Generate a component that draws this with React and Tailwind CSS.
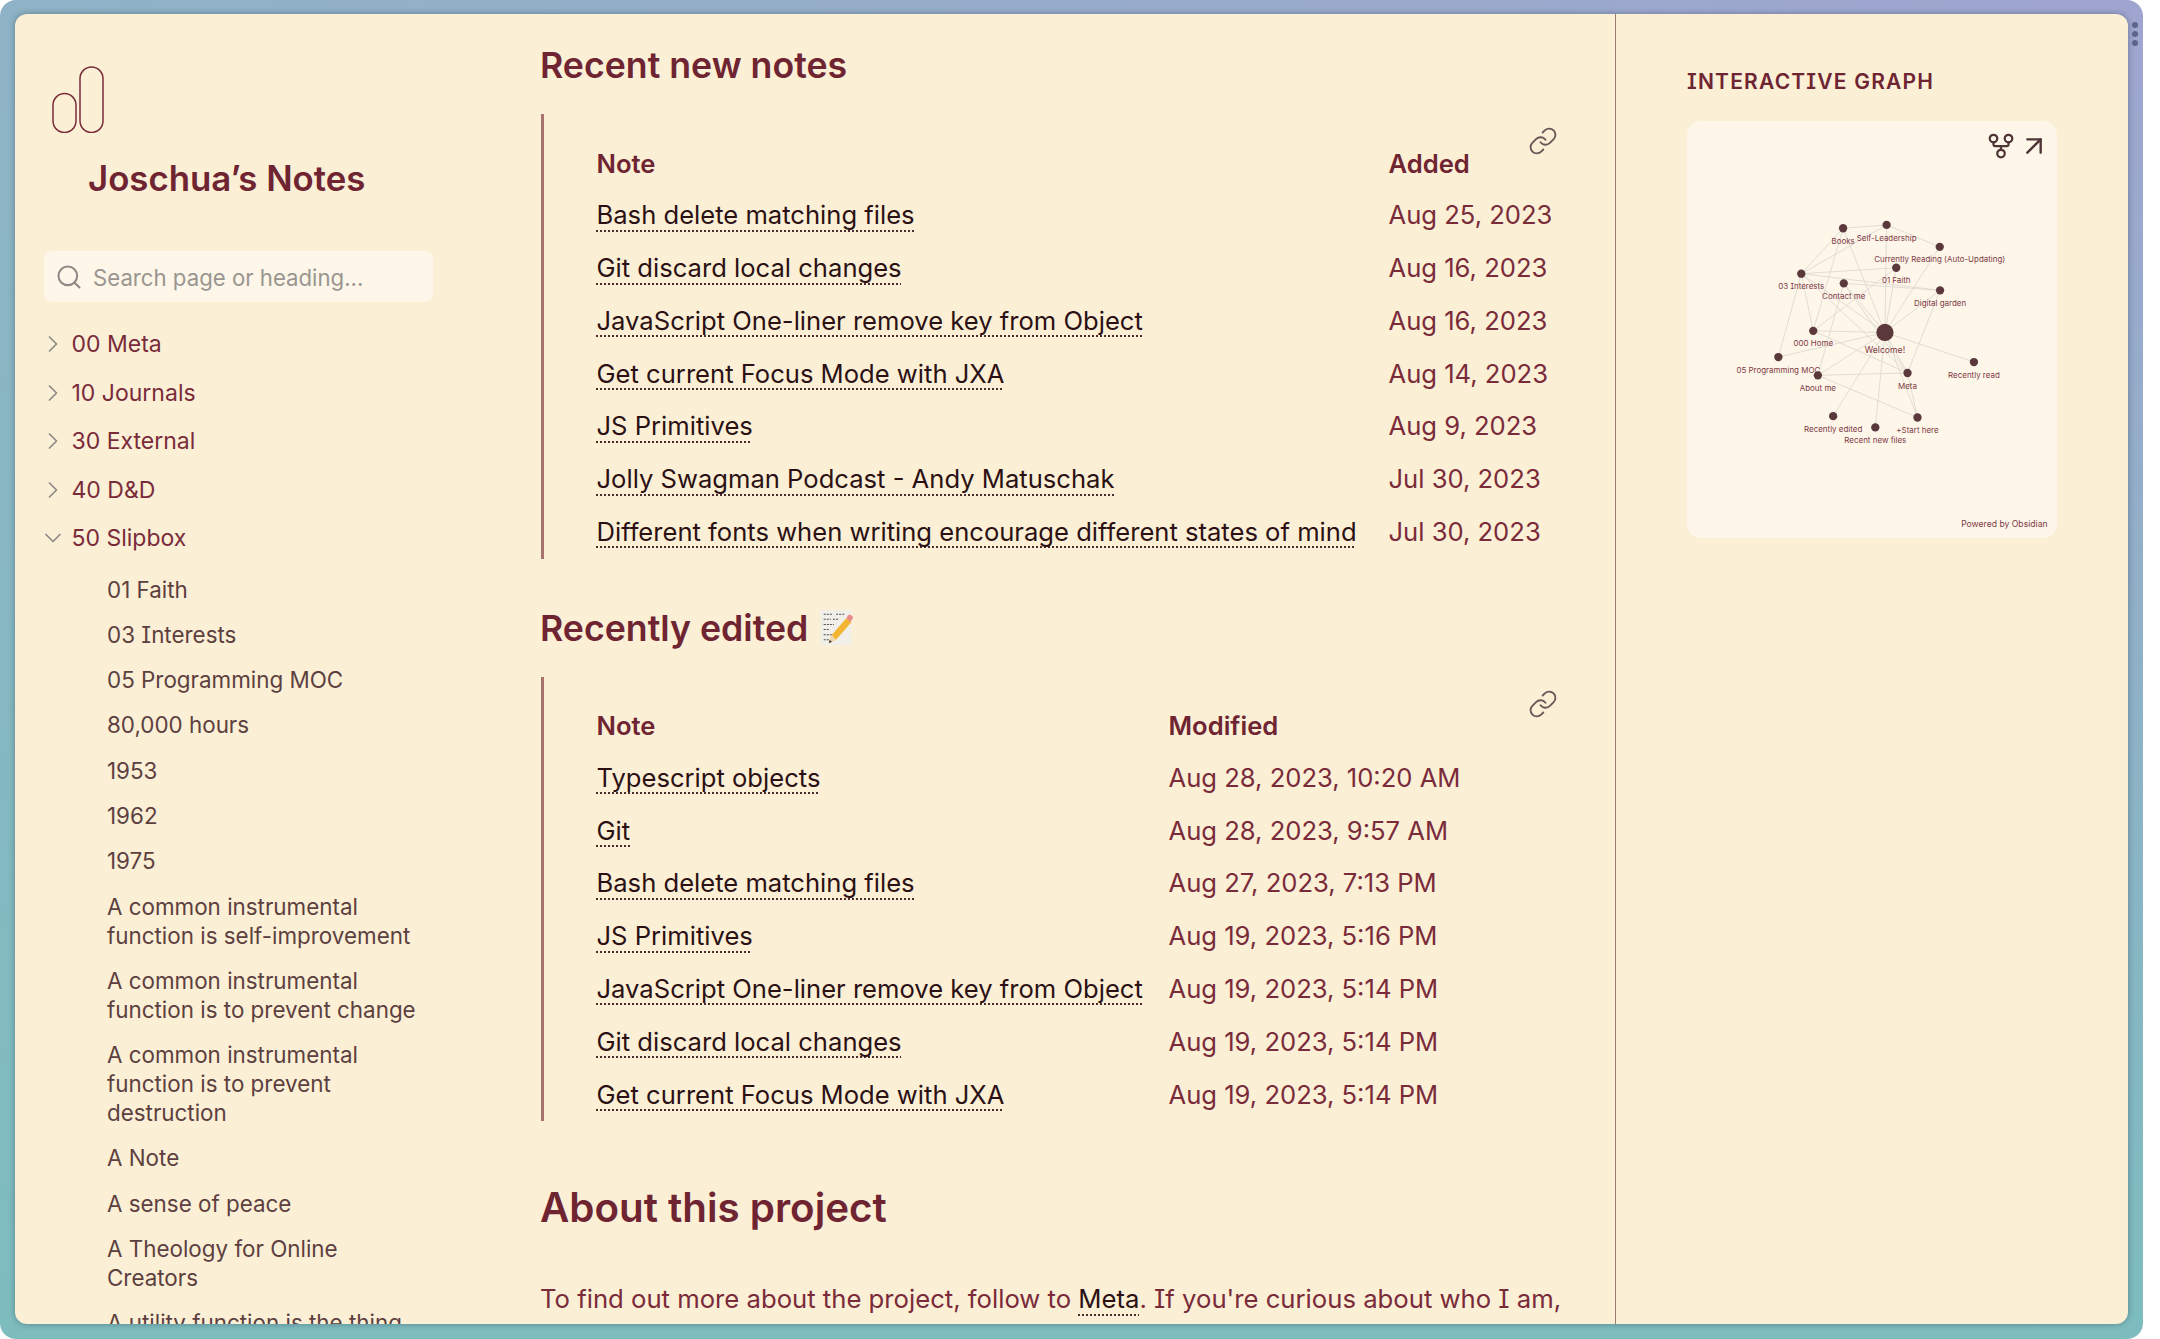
import React from 'react';
import { ArrowUpRight, ChevronDown, ChevronRight, GitFork, Link, Search } from 'lucide-react';

const folders = ['00 Meta', '10 Journals', '30 External', '40 D&D'];

const slipbox = [
  '01 Faith',
  '03 Interests',
  '05 Programming MOC',
  '80,000 hours',
  '1953',
  '1962',
  '1975',
  'A common instrumental function is self-improvement',
  'A common instrumental function is to prevent change',
  'A common instrumental function is to prevent destruction',
  'A Note',
  'A sense of peace',
  'A Theology for Online Creators',
  'A utility function is the thing',
];

const newNotes = [
  ['Bash delete matching files', 'Aug 25, 2023'],
  ['Git discard local changes', 'Aug 16, 2023'],
  ['JavaScript One-liner remove key from Object', 'Aug 16, 2023'],
  ['Get current Focus Mode with JXA', 'Aug 14, 2023'],
  ['JS Primitives', 'Aug 9, 2023'],
  ['Jolly Swagman Podcast - Andy Matuschak', 'Jul 30, 2023'],
  ['Different fonts when writing encourage different states of mind', 'Jul 30, 2023'],
];

const editedNotes = [
  ['Typescript objects', 'Aug 28, 2023, 10:20 AM'],
  ['Git', 'Aug 28, 2023, 9:57 AM'],
  ['Bash delete matching files', 'Aug 27, 2023, 7:13 PM'],
  ['JS Primitives', 'Aug 19, 2023, 5:16 PM'],
  ['JavaScript One-liner remove key from Object', 'Aug 19, 2023, 5:14 PM'],
  ['Git discard local changes', 'Aug 19, 2023, 5:14 PM'],
  ['Get current Focus Mode with JXA', 'Aug 19, 2023, 5:14 PM'],
];

const nodes = {
  books: [549, 535, 'Books', 571],
  self: [680, 525, 'Self-Leadership', 562],
  reading: [840, 591, 'Currently Reading (Auto-Updating)', 628],
  faith: [709, 654, '01 Faith', 690],
  interests: [423, 672, '03 Interests', 709],
  contact: [551, 701, 'Contact me', 738],
  garden: [841, 722, 'Digital garden', 759],
  home: [459, 844, '000 Home', 881],
  programming: [354, 923, '05 Programming MOC', 960],
  about: [473, 978, 'About me', 1015],
  meta: [743, 971, 'Meta', 1008],
  read: [943, 938, 'Recently read', 975],
  edited: [519, 1101, 'Recently edited', 1138],
  newFiles: [646, 1135, 'Recent new files', 1173],
  start: [773, 1105, '+Start here', 1142],
};

const extraEdges = [
  ['books', 'self'],
  ['self', 'reading'],
  ['books', 'interests'],
  ['self', 'interests'],
  ['interests', 'faith'],
  ['interests', 'garden'],
  ['interests', 'home'],
  ['interests', 'programming'],
  ['contact', 'garden'],
  ['contact', 'about'],
  ['contact', 'meta'],
  ['books', 'home'],
  ['faith', 'home'],
  ['garden', 'meta'],
  ['about', 'meta'],
  ['about', 'start'],
  ['home', 'meta'],
  ['start', 'meta'],
  ['interests', 'meta'],
];

const Graph = () => (
  <svg viewBox="80 215 1112 1250" className="block w-[370px] h-[416px] pt-[1px]">
    {Object.values(nodes).map((n) => (
      <line key={n[2]} x1="675" y1="849" x2={n[0]} y2={n[1]} stroke="#dcd8d0" strokeWidth="2.6" />
    ))}
    {extraEdges.map(([a, b]) => (
      <line key={a + b} x1={nodes[a][0]} y1={nodes[a][1]} x2={nodes[b][0]} y2={nodes[b][1]} stroke="#dcd8d0" strokeWidth="2.6" />
    ))}
    {Object.values(nodes).map((n) => (
      <g key={n[2]}>
        <circle cx={n[0]} cy={n[1]} r="12.5" fill="#5a383c" />
        <text x={n[0]} y={n[3] + 10} textAnchor="middle" fontSize="24" fill="#7d3a46" fontFamily="Inter, sans-serif">{n[2]}</text>
      </g>
    ))}
    <circle cx="675" cy="849" r="26" fill="#5a383c" />
    <text x="675" y="912" textAnchor="middle" fontSize="26" fill="#7d3a46" fontFamily="Inter, sans-serif">Welcome!</text>
    <text x="1165" y="1436" textAnchor="end" fontSize="26" fill="#7d3a46" fontFamily="Inter, sans-serif">Powered by Obsidian</text>
  </svg>
);

const Memo = () => (
  <svg viewBox="0 0 32 36" className="inline-block w-[34px] h-[37px] ml-[11px] align-[-5px]">
    <rect x="1" y="1" width="30" height="34" fill="#f1efe9" />
    <path d="M4 5h9M16 5h9M4 10h7M13 10h6M4 15h10M4 20h6M4 25h8M4 30h5" stroke="#55524e" strokeWidth="1" strokeDasharray="2 1" />
    <path d="M9 33l3-8 14-16 5 4-15 17z" fill="#f2b632" />
    <path d="M26 9l2-3c1-1 3 0 4 1 1 2 0 3-1 4l-1 2z" fill="#e98a8a" />
    <path d="M9 33l3-8 4 5z" fill="#eed6b0" />
    <path d="M9 33l1-3 2 2z" fill="#333" />
  </svg>
);

const NoteLink = ({ children }) => (
  <a className="text-[#2b1114] underline decoration-dotted decoration-2 underline-offset-[6px] [text-decoration-skip-ink:none] decoration-[#4a2a2c]">
    {children}
  </a>
);

const NoteTable = ({ column, rows, noteWidth }) => (
  <div className="relative border-l-[3px] border-[#a8736e] ml-[1px] pl-[52.5px] pt-[25px]">
    <Link className="absolute right-[3px] top-[12px] w-[30px] h-[30px] text-[#6a5757]" strokeWidth={1.5} />
    <table className="border-collapse">
      <thead>
        <tr className="h-[50px] text-left font-semibold text-[#6f2432]">
          <th className={`font-semibold ${noteWidth}`}>Note</th>
          <th className="font-semibold">{column}</th>
        </tr>
      </thead>
      <tbody>
        {rows.map(([note, date]) => (
          <tr key={note} className="h-[52.8px] whitespace-nowrap">
            <td><NoteLink>{note}</NoteLink></td>
            <td className="text-[#7a2b3a]">{date}</td>
          </tr>
        ))}
      </tbody>
    </table>
  </div>
);

export default function App() {
  return (
    <div className="w-[2160px] h-[1339px] bg-white overflow-hidden font-['Inter',sans-serif] [font-feature-settings:'cv08']">
      <div className="relative w-[2143px] h-full rounded-[16px] pl-[15px] pr-[15px] pt-[14px] pb-[15px] bg-[linear-gradient(to_bottom,rgba(125,189,190,0)_0%,#7dbdbe_100%),linear-gradient(to_right,#8fb3c6,#a0a5d0)]">
        {/* window dots */}
        <div className="absolute right-[5px] top-[22px] flex flex-col gap-[3px]">
          <span className="w-[6px] h-[6px] rounded-full bg-[#5c6488]" />
          <span className="w-[6px] h-[6px] rounded-full bg-[#5c6488]" />
          <span className="w-[6px] h-[6px] rounded-full bg-[#5c6488]" />
        </div>

        <div className="flex h-full rounded-[12px] overflow-hidden bg-[#fbefd6] shadow-[0_0_6px_rgba(40,60,80,0.45)]">
          {/* Sidebar */}
          <div className="w-[510px] shrink-0 pt-[52px]">
            <svg viewBox="0 0 52 67" className="block ml-[37px] w-[52px] h-[67px]" fill="none" stroke="#7a2b3a" strokeWidth="1.5">
              <rect x="1" y="27.5" width="23" height="39" rx="11.5" />
              <rect x="28" y="1" width="23" height="65.5" rx="11.5" />
            </svg>
            <h1 className="ml-[73px] mt-[23px] text-[34.8px] leading-[44px] font-semibold text-[#6f2432]">Joschua’s Notes</h1>
            <div className="ml-[29px] mt-[51px] w-[389px] h-[51px] rounded-[8px] bg-[#fdf6e9] flex items-center pl-[11px]">
              <Search className="w-[28px] h-[28px] text-[#8f8a86]" strokeWidth={1.8} />
              <span className="ml-[10px] pt-[2px] text-[22.2px] text-[#9a9590]">Search page or heading...</span>
            </div>
            <div className="ml-[29px] mt-[18px]">
              {folders.map((folder) => (
                <div key={folder} className="h-[48.5px] flex items-center text-[23px] text-[#7a2b3a]">
                  <ChevronRight className="w-[28px] h-[28px] ml-[-5px] mr-[4.5px] text-[#8f8a86]" strokeWidth={1.5} />
                  {folder}
                </div>
              ))}
              <div className="h-[48.5px] flex items-center text-[23px] text-[#7a2b3a]">
                <ChevronDown className="w-[28px] h-[28px] ml-[-5px] mr-[4.5px] text-[#8f8a86]" strokeWidth={1.5} />
                50 Slipbox
              </div>
            </div>
            <div className="ml-[92px] mt-[4px] w-[322px]">
              {slipbox.map((item) => (
                <div key={item} className="py-[8.15px] text-[22.4px] leading-[29px] text-[#5d3f40]">{item}</div>
              ))}
            </div>
          </div>

          {/* Note */}
          <div className="w-[1091px] shrink-0 border-r border-[#9d7b74] pl-[15px] pr-[54px] pt-[28px] text-[25.6px] text-[#7a2b3a]">
            <h2 className="text-[35.7px] leading-[46px] font-semibold text-[#6f2432] mb-[26px]">Recent new notes</h2>
            <NoteTable column="Added" rows={newNotes} noteWidth="w-[792px]" />
            <h2 className="text-[35.7px] leading-[46px] font-semibold text-[#6f2432] mt-[46px] mb-[26px]">
              Recently edited<Memo />
            </h2>
            <NoteTable column="Modified" rows={editedNotes} noteWidth="w-[572px]" />
            <h2 className="text-[40.3px] leading-[54px] font-semibold text-[#6f2432] mt-[60px]">About this project</h2>
            <p className="mt-[45px] leading-[38px] text-[25.68px] whitespace-nowrap">
              To find out more about the project, follow to <NoteLink>Meta</NoteLink>. If you're curious about who I am,
            </p>
          </div>

          {/* Right panel */}
          <div className="flex-1 pl-[71px] pt-[54px]">
            <h3 className="text-[21px] leading-[28px] font-semibold tracking-[1.2px] text-[#6f2432]">INTERACTIVE GRAPH</h3>
            <div className="relative mt-[25px] w-[370px] h-[417px] rounded-[14px] bg-[#fdf6e9]">
              <Graph />
              <GitFork className="absolute top-[10px] right-[41px] w-[30px] h-[30px] text-[#4f3537]" strokeWidth={1.8} />
              <ArrowUpRight className="absolute top-[9px] right-[7px] w-[32px] h-[32px] text-[#4f3537]" strokeWidth={1.8} />
            </div>
          </div>
        </div>
      </div>
    </div>
  );
}
